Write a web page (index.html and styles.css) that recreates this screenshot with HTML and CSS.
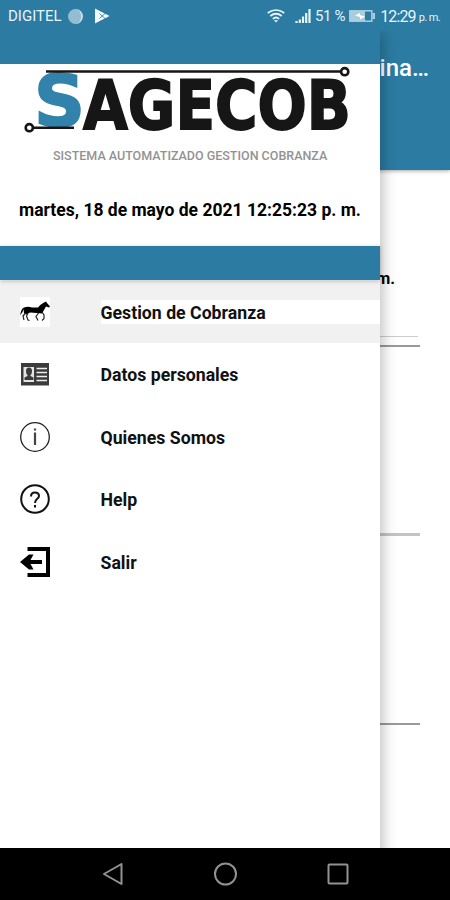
FILE: index.html
```html
<!DOCTYPE html>
<html lang="es">
<head>
  <meta charset="UTF-8" />
  <meta name="viewport" content="width=device-width, initial-scale=1.0"/>
  <title>SAGECOB</title>
  <link rel="stylesheet" href="styles.css">
</head>
<body>

  <div class="screen">

    <!-- Page behind the drawer -->
    <main class="page">
      <header class="app-bar">
        <h1 class="app-title">ina…</h1>
      </header>
      <div class="page-content">
        <p class="page-date">m.</p>
        <hr class="line line-light">
        <hr class="line line-dark">
        <hr class="line line-thick">
        <hr class="line line-last">
      </div>
    </main>

    <!-- Navigation drawer -->
    <aside class="drawer">
      <div class="drawer-top"></div>
      <div class="drawer-header">
        <svg class="logo" width="380" height="80" viewBox="0 64 380 80">
          <text class="logo-s" x="34" y="126" textLength="51" lengthAdjust="spacingAndGlyphs">S</text>
          <text class="logo-text" x="83" y="128.500" textLength="268" lengthAdjust="spacingAndGlyphs">AGECOB</text>
          <g fill="none" stroke="#161616" stroke-width="2.600">
            <path d="M46 71.500H340M34 127.700H74"/>
            <circle cx="344.700" cy="71.700" r="3.600"/>
            <circle cx="29.300" cy="127.700" r="3.600"/>
          </g>
        </svg>
        <p class="slogan">SISTEMA AUTOMATIZADO GESTION COBRANZA</p>
        <p class="date">martes, 18 de mayo de 2021 12:25:23 p. m.</p>
      </div>
      <div class="drawer-bar"></div>

      <nav class="menu">
        <a class="item active">
          <svg class="icon horse" width="30" height="30" viewBox="0 0 30 30">
            <path d="M4 10.500Q8 9 12 10.500L18 10.500Q21 7 24 5.500L26 4.500 27 6 30 9.500 29 10.500 26 9.500 24 13 22 16.500 17 16 10 15.500 6 17.500 4 16 3.500 12 2.500 15 0 18.500Q1 14 2 12Z"/>
            <path fill="none" stroke="#222" stroke-width="1.200" d="M5.500 16 3 19 4 23M8 16 6.500 19 8 23 9.500 23.500M18.500 16 16 19.500 18 23.500M22 15 24 18 24 21.500 22 23.500"/>
          </svg>
          <span class="label">Gestion de Cobranza</span>
        </a>
        <a class="item">
          <svg class="icon" width="30" height="30" viewBox="0 0 30 30">
            <path fill="#3b3b3b" d="M1 4H29V26.500H1Z"/>
            <path fill="#e5e5e5" d="M3.500 8H14V23H3.500Z"/>
            <path fill="#3b3b3b" d="M6 12a3 3.500 0 0 1 6 0q0 3-1.500 4v1l3 1.500V21H4.500v-2.500L7.500 17v-1q-1.500-1-1.500-4Z"/>
            <path stroke="#eee" stroke-width="1.700" d="M16.500 9.500H27M16.500 13.500H27M16.500 17.500H27M16.500 21.500H27"/>
          </svg>
          <span class="label">Datos personales</span>
        </a>
        <a class="item">
          <svg class="icon" width="30" height="30" viewBox="0 0 30 30">
            <circle cx="15" cy="15" r="14.300" fill="none" stroke="#222" stroke-width="1.300"/>
            <path stroke="#444" stroke-width="2.200" d="M15 6.500V8.500M15 10.500V23"/>
          </svg>
          <span class="label">Quienes Somos</span>
        </a>
        <a class="item">
          <svg class="icon" width="30" height="30" viewBox="0 0 30 30">
            <g fill="none" stroke="#111" stroke-width="2">
              <circle cx="15" cy="15" r="13.800"/>
              <path d="M11 12.500Q11 8.500 15 8.500T19 12Q19 13.500 17 15T15 19M15 21V23.500"/>
            </g>
          </svg>
          <span class="label">Help</span>
        </a>
        <a class="item">
          <svg class="icon" width="30" height="30" viewBox="0 0 30 30">
            <path fill="none" stroke="#000" stroke-width="4" d="M7.500 2H28V28H7.500" />
            <path d="M0 15 9 7.500H13.500L10.500 13H22V17H10.500L13.500 22.500H9Z"/>
          </svg>
          <span class="label">Salir</span>
        </a>
      </nav>
    </aside>

    <div class="status-bar">
      <span class="carrier">DIGITEL</span>
      <span class="dot"></span>
      <svg class="play" width="16" height="16" viewBox="0 0 16 16">
        <path fill="#f4fbff" d="M1 .5 15.500 8 1 15.500Z"/>
        <path fill="none" stroke="#2b7ba2" stroke-width=".9" d="M5.500 5.500 11.500 11M5.500 10.500 11.500 5"/>
      </svg>
      <svg class="wifi" width="18" height="14" viewBox="0 0 18 14">
        <g fill="none" stroke="#e6f4fa" stroke-width="1.700">
          <path d="M.7 4Q9-2 17.300 4M3.300 7Q9 2.500 14.700 7M5.800 9.800Q9 7.200 12.200 9.800"/>
        </g>
        <path fill="#e6f4fa" d="M6.800 11.200H11.200L9 13.500Z"/>
      </svg>
      <svg class="signal" width="16" height="14" viewBox="0 0 16 14">
        <path stroke="#e6f4fa" stroke-width="2.200" d="M1.500 14V12M4.800 14V10.500M8 14V7.500M11.200 14V4M14.500 14V0"/>
      </svg>
      <span class="percent">51 %</span>
      <svg class="battery" width="26" height="12" viewBox="0 0 26 12">
        <rect x=".8" y=".8" width="22" height="10.400" fill="none" stroke="#a9cddd" stroke-width="1.500"/>
        <path fill="#a9cddd" d="M1 1H16V11H1ZM23.500 3H26V9H23.500Z"/>
        <path fill="#fff" d="M6 5.500 11 3V5L16 6.500 11 9.500V7Z"/>
      </svg>
      <span class="time">12:29</span>
      <span class="ampm">p. m.</span>
    </div>

    <!-- Android buttons -->
    <footer class="nav-bar">
      <svg width="24" height="24" viewBox="0 0 24 24"><path d="M21.500 2V22L4 12Z"/></svg>
      <svg width="24" height="24" viewBox="0 0 24 24"><circle cx="12.500" cy="12" r="10.500"/></svg>
      <svg width="24" height="24" viewBox="0 0 24 24"><rect x="2.500" y="2.500" width="19" height="19" rx="1"/></svg>
    </footer>
  </div>

</body>
</html>
```
FILE: styles.css
```css
* {
  box-sizing: border-box;
}

body {
  margin: 0;
  font-family: Roboto, "Liberation Sans", sans-serif;
  background: #fff;
  overflow: hidden;
}

h1, p {
  margin: 0;
}

.screen {
  position: relative;
  width: 450px;
  height: 900px;
  display: flex;
  flex-direction: column;
  overflow: hidden;
}

/* page */
.page {
  flex: 1;
}

.app-bar {
  height: 170px;
  padding: 53px 21px 0 0;
  background: #2b7ba2;
  box-shadow: 0 1px 4px rgba(0, 0, 0, 0.35);
}

.app-title {
  font-size: 24px;
  line-height: 30px;
  font-weight: 500;
  text-align: right;
  color: #fff;
}

.page-content {
  padding: 99px 30px 0 0;
}

.page-date {
  height: 67px;
  padding-right: 25px;
  font-size: 16.5px;
  line-height: 20px;
  font-weight: bold;
  text-align: right;
}

.line {
  height: 1px;
  margin: 0;
  border: 0;
  background: #888;
}

.line-light {
  margin-right: 2px;
  background: #ccc;
}

.line-dark {
  height: 2px;
  margin-top: 8px;
  background: #999;
}

.line-thick {
  height: 3px;
  margin-top: 186px;
  background: #c4c4c4;
}

.line-last {
  height: 2px;
  margin-top: 187px;
  background: #999;
}

/* drawer */
.drawer {
  position: absolute;
  top: 0;
  left: 0;
  width: 380px;
  height: 848px;
  background: #fff;
  box-shadow: 2px 34px 14px rgba(0, 0, 0, 0.28);
}

.drawer-top {
  height: 64px;
  background: #2b7ba2;
}

.drawer-header {
  height: 182px;
}

.logo {
  display: block;
  overflow: visible;
}

.logo-text,
.logo-s {
  font-family: "DejaVu Sans", sans-serif;
  font-weight: bold;
  font-size: 67px;
  fill: #161616;
  stroke: #161616;
  stroke-width: 1.8px;
}

.logo-s {
  font-size: 71px;
  fill: #3183ac;
  stroke: #3183ac;
}

.slogan {
  padding-left: 53px;
  padding-top: 4px;
  font-size: 12.5px;
  line-height: 16px;
  font-weight: 500;
  color: #929292;
  white-space: nowrap;
}

.date {
  padding: 36px 0 0 19px;
  font-size: 17.5px;
  line-height: 20px;
  font-weight: bold;
  white-space: nowrap;
}

.drawer-bar {
  position: relative;
  height: 34px;
  background: #2b7ba2;
  box-shadow: 0 1px 4px rgba(0, 0, 0, 0.25);
}

.menu {
  padding-top: 0.5px;
}

.item {
  display: flex;
  align-items: center;
  height: 62.5px;
  padding-left: 19.5px;
}

.active {
  background: #f1f1f1;
}

.icon {
  flex: none;
  margin-right: 51px;
}

.horse {
  background: #fff;
}

.label {
  flex: 1;
  padding-top: 2px;
  font-size: 17.7px;
  line-height: 22px;
  font-weight: bold;
  color: #111;
}

.active .label {
  background: #fff;
}

/* status bar */
.status-bar {
  position: absolute;
  top: 0;
  left: 0;
  width: 450px;
  height: 31px;
  padding: 1px 0 0 8px;
  display: flex;
  align-items: center;
  font-size: 15px;
  color: #e6f4fa;
  white-space: nowrap;
  background: #2b7ba2;
}

.dot {
  width: 15px;
  height: 15px;
  margin-left: 6px;
  border-radius: 50%;
  background: #93bdd0;
  border-right: 2px solid #c5dfe9;
}

.play {
  margin-left: 11px;
}

.wifi {
  margin-left: auto;
}

.signal {
  margin: 0 4px 0 10px;
}

.percent {
  letter-spacing: -0.3px;
}

.battery {
  margin: 0 5px 0 4px;
}

.time {
  font-size: 16px;
  letter-spacing: -0.9px;
}

.ampm {
  margin: 3px 10px 0 3px;
  font-size: 11px;
  letter-spacing: -0.6px;
}

/* android buttons */
.nav-bar {
  position: relative;
  height: 52px;
  padding: 0 100px;
  display: flex;
  align-items: center;
  justify-content: space-between;
  background: #000;
}

.nav-bar svg {
  fill: none;
  stroke: #929292;
  stroke-width: 2;
  stroke-linejoin: round;
}
```
